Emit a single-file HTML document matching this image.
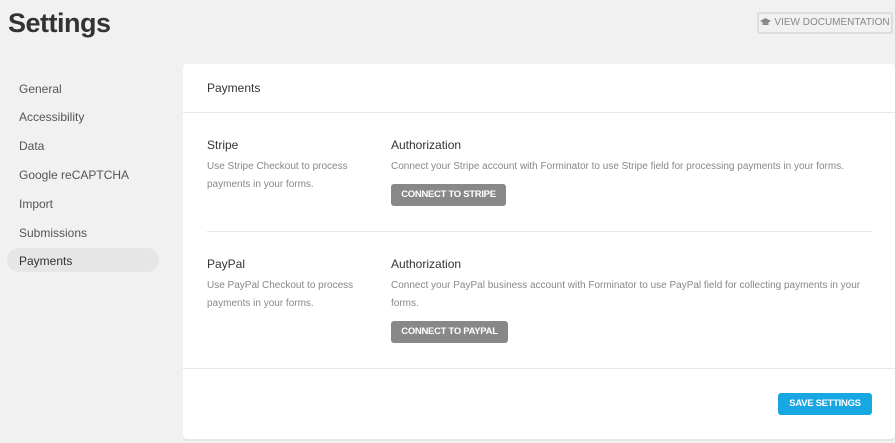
<!DOCTYPE html>
<html><head><style>
body{margin:0;width:895px;height:443px;background:#f1f1f1;font-family:"Liberation Sans",sans-serif;position:relative;overflow:hidden}
.a{position:absolute}
h1{position:absolute;left:8px;top:8px;margin:0;font-size:27px;font-weight:bold;color:#333;letter-spacing:-0.5px}
.doc{left:757px;top:12px;width:136px;height:22px;border:2px solid #ddd;border-radius:3px;box-sizing:border-box;font-size:10px;color:#888;line-height:18px;text-align:center;background:#f1f1f1}
.nav{left:19px;font-size:12px;color:#555}
.sel{left:7px;top:248px;width:152px;height:24px;background:#e6e6e6;border-radius:12px}
.card{left:183px;top:64px;width:712px;height:375px;background:#fff;border-radius:4px;box-shadow:0 2px 0 #e6e6e6}
.t{font-size:12px;color:#333}
.d{font-size:10px;color:#888;line-height:18px}
.btn{background:#888;color:#fff;font-size:9.5px;font-weight:bold;border-radius:3px;text-align:center;line-height:22px;letter-spacing:-0.3px}
.hr{height:1px;background:#e6e6e6}
</style></head><body>
<h1>Settings</h1>
<div class="a doc"><svg width="11" height="8" viewBox="0 0 11 8" style="vertical-align:-1px;margin-right:3px"><path d="M0 3L5.5 0L11 3L5.5 6Z" fill="#888"/><path d="M2.5 4.5V7H8.5V4.5L5.5 6Z" fill="#888"/></svg>VIEW DOCUMENTATION</div>
<div class="a sel"></div>
<div class="a nav" style="top:82px">General</div>
<div class="a nav" style="top:110px">Accessibility</div>
<div class="a nav" style="top:139px">Data</div>
<div class="a nav" style="top:168px">Google reCAPTCHA</div>
<div class="a nav" style="top:197px">Import</div>
<div class="a nav" style="top:226px">Submissions</div>
<div class="a nav" style="top:254px;color:#333">Payments</div>
<div class="a card"></div>
<div class="a t" style="left:207px;top:81px">Payments</div>
<div class="a hr" style="left:183px;top:112px;width:712px"></div>
<div class="a t" style="left:207px;top:138px">Stripe</div>
<div class="a d" style="left:207px;top:158px;width:170px">Use Stripe Checkout to process payments in your forms.</div>
<div class="a t" style="left:391px;top:138px">Authorization</div>
<div class="a d" style="left:391px;top:158px;width:480px">Connect your Stripe account with Forminator to use Stripe field for processing payments in your forms.</div>
<div class="a btn" style="left:391px;top:184px;width:115px">CONNECT TO STRIPE</div>
<div class="a hr" style="left:207px;top:231px;width:665px"></div>
<div class="a t" style="left:207px;top:257px">PayPal</div>
<div class="a d" style="left:207px;top:277px;width:170px">Use PayPal Checkout to process payments in your forms.</div>
<div class="a t" style="left:391px;top:257px">Authorization</div>
<div class="a d" style="left:391px;top:277px;width:480px">Connect your PayPal business account with Forminator to use PayPal field for collecting payments in your forms.</div>
<div class="a btn" style="left:391px;top:321px;width:117px">CONNECT TO PAYPAL</div>
<div class="a hr" style="left:183px;top:368px;width:712px"></div>
<div class="a btn" style="left:778px;top:393px;width:94px;background:#17a8e3">SAVE SETTINGS</div>
</body></html>
